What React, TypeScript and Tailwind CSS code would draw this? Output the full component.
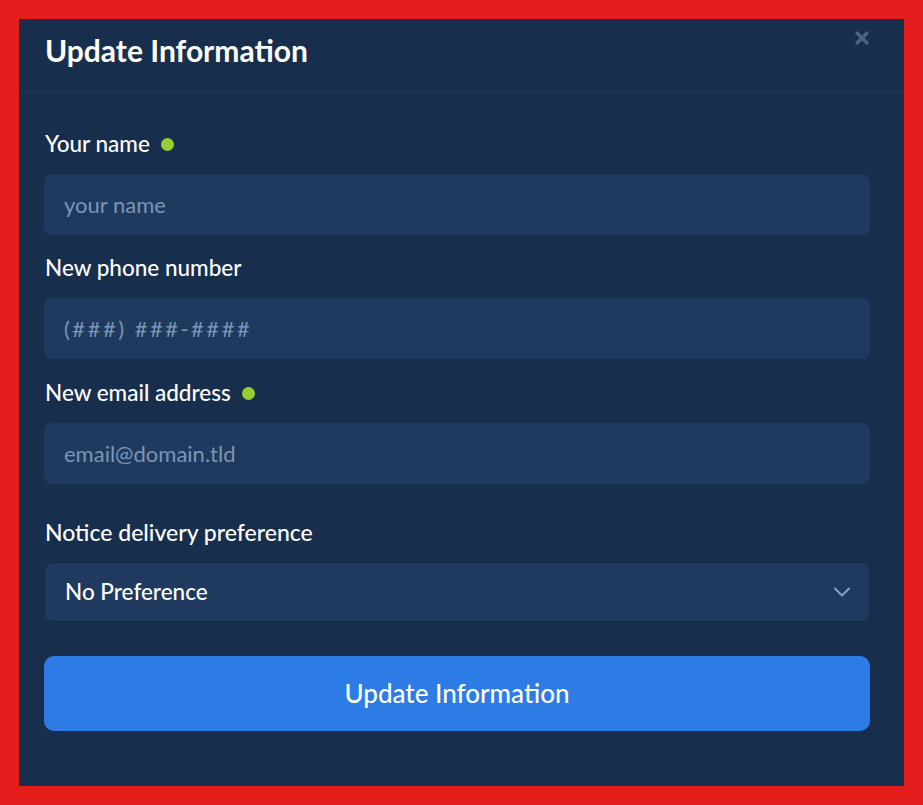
import { X, ChevronDown } from "lucide-react";

const FONT = { fontFamily: "Lato, 'Open Sans', sans-serif" };

interface FieldProps {
  label: string;
  placeholder: string;
  required?: boolean;
  className?: string;
  inputClass?: string;
}

function Field({ label, placeholder, required, className = "", inputClass = "" }: FieldProps) {
  return (
    <div className={`flex flex-col ${className}`}>
      <label className="flex items-center gap-[11px] h-6 pl-px text-[22.5px] leading-6 font-medium text-white">
        {label}
        {required && <span className="w-[13px] h-[13px] rounded-full bg-[#9acd32]" />}
      </label>
      <input
        placeholder={placeholder}
        className={`mt-[18px] h-[61px] w-full rounded-lg bg-[#1f3a5e] px-5 text-[22px] text-white placeholder:text-[#7d95b6] outline-none ${inputClass}`}
      />
    </div>
  );
}

export default function App() {
  return (
    <div className="w-[923px] h-[805px] bg-[#e41c1c] p-[19px]" style={FONT}>
      <div className="relative h-full flex flex-col bg-[#172e4d]">
        <div className="h-[73px] shrink-0 border-b border-[#1e3756] pl-[26px] pt-[15px]">
          <h2 className="text-[30px] leading-8 font-bold text-white">Update Information</h2>
        </div>
        <button className="absolute right-[32px] top-[9px] text-[#4b6384]">
          <X size={20} strokeWidth={4} />
        </button>

        <form className="flex flex-col pl-[25px] pr-[34px] pt-[40px]">
          <Field label="Your name" placeholder="your name" required />
          <Field label="New phone number" placeholder="(###) ###-####" className="mt-[21px]" inputClass="tracking-[2.5px]" />
          <Field label="New email address" placeholder="email@domain.tld" required className="mt-[22px]" />

          <div className="flex flex-col mt-[36px]">
            <label className="h-6 pl-px text-[23px] leading-6 font-medium text-white">Notice delivery preference</label>
            <div className="mt-[18px] h-[60px] flex items-center justify-between rounded-lg border border-[#162a46] bg-[#1f3a5e] pl-5 pr-[13px]">
              <span className="text-[22.5px] font-medium text-white">No Preference</span>
              <ChevronDown size={28} strokeWidth={1.7} className="text-[#8ba0bf]" />
            </div>
          </div>

          <button type="button" className="mt-[34px] h-[75px] w-full rounded-[10px] bg-[#2d7be5] text-[26px] font-medium text-white">
            Update Information
          </button>
        </form>
      </div>
    </div>
  );
}
